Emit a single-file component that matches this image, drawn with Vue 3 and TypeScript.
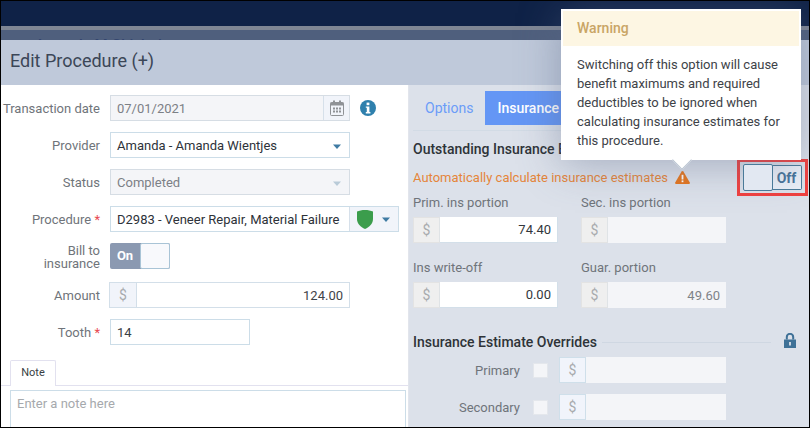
<script setup lang="ts">
const notch = 'M1 3.5h8L5 8z'
</script>

<template>
  <div class="frame">
    <div class="topbar">
      <span class="peek peek-grey"></span>
      <span class="peek peek-red"></span>
    </div>
    <div class="rule"></div>
    <div class="backdrop"><span class="backdrop-name">Amanda M Chisholm</span></div>
    <div class="modal">
      <header class="modal-head">Edit Procedure (+)</header>
      <div class="modal-body">
        <section class="left">
          <div class="row">
            <label class="lbl">Transaction date</label>
            <div class="field date disabled">
              <span class="val">07/01/2021</span>
              <span class="addon cal">
                <svg width="14" height="16" viewBox="0 0 14 16">
                  <rect x="0.5" y="2.5" width="13" height="13" rx="1" fill="none" stroke="#8f9296" />
                  <rect x="0.5" y="2.5" width="13" height="3" fill="#8f9296" />
                  <rect x="3" y="0.5" width="2" height="3" fill="#8f9296" />
                  <rect x="9" y="0.5" width="2" height="3" fill="#8f9296" />
                  <path d="M3 7.5h2v2H3zM6 7.5h2v2H6zM9 7.5h2v2H9zM3 10.5h2v2H3zM6 10.5h2v2H6zM9 10.5h2v2H9z" fill="#8f9296" />
                </svg>
              </span>
            </div>
            <svg class="info" width="16" height="16" viewBox="0 0 16 16">
              <circle cx="8" cy="8" r="8" fill="#2f80ad" />
              <rect x="6.6" y="2.6" width="2.8" height="2.6" fill="#fff" />
              <path d="M5.8 6.4h3.6v5.6h1v1.4H5.800V12h1V7.800h-1z" fill="#fff" />
            </svg>
          </div>
          <div class="row">
            <label class="lbl">Provider</label>
            <div class="field select">
              <span class="val dark">Amanda - Amanda Wientjes</span>
              <svg class="caret" width="10" height="10" viewBox="0 0 10 10"><path :d="notch" fill="#3f7ba3" /></svg>
            </div>
          </div>
          <div class="row">
            <label class="lbl">Status</label>
            <div class="field select disabled">
              <span class="val">Completed</span>
              <svg class="caret" width="10" height="10" viewBox="0 0 10 10"><path :d="notch" fill="#b9cbd8" /></svg>
            </div>
          </div>
          <div class="row">
            <label class="lbl">Procedure <i class="req">*</i></label>
            <div class="field proc">
              <span class="val dark">D2983 - Veneer Repair, Material Failure</span>
              <span class="addon shield">
                <svg width="16" height="19" viewBox="0 0 16 19">
                  <path d="M8 0C11 0 14 .6 16 1.6V9c0 4.6-3.6 8-8 10C3.600 17 0 13.600 0 9V1.600C2 .6 5 0 8 0z" fill="#3b9d4c" />
                </svg>
                <svg width="10" height="10" viewBox="0 0 10 10"><path :d="notch" fill="#3f7ba3" /></svg>
              </span>
            </div>
          </div>
          <div class="row bill">
            <label class="lbl two">Bill to<br />insurance</label>
            <div class="switch on">
              <span class="switch-label">On</span>
              <span class="knob"></span>
            </div>
          </div>
          <div class="row amount">
            <label class="lbl">Amount</label>
            <div class="money wide">
              <span class="cur">$</span>
              <span class="amt">124.00</span>
            </div>
          </div>
          <div class="row tooth">
            <label class="lbl">Tooth <i class="req">*</i></label>
            <div class="field short"><span class="val ink">14</span></div>
          </div>
          <div class="tabs-note">
            <span class="note-tab">Note</span>
          </div>
          <div class="note-box">Enter a note here</div>
        </section>

        <section class="right">
          <nav class="tabs">
            <span class="tab">Options</span>
            <span class="tab active">Insurance</span>
          </nav>
          <h3 class="heading first">Outstanding Insurance Estimates</h3>
          <div class="auto">
            <span class="auto-text">Automatically calculate insurance estimates</span>
            <svg class="warn" width="15" height="13" viewBox="0 0 15 13">
              <path d="M7.5 0c.4 0 .7.2.9.5l6.400 11c.4.7 0 1.500-.8 1.500H1c-.8 0-1.200-.8-.8-1.500l6.400-11c.2-.3.5-.5.900-.5z" fill="#e6761d" />
              <rect x="6.600" y="3.800" width="1.800" height="4.700" fill="#fff" />
              <rect x="6.600" y="9.400" width="1.800" height="1.800" fill="#fff" />
            </svg>
            <div class="switch-wrap">
              <div class="switch off">
                <span class="knob"></span>
                <span class="switch-label">Off</span>
              </div>
            </div>
          </div>
          <div class="grid">
            <div class="cell">
              <label class="cap">Prim. ins portion</label>
              <div class="money"><span class="cur grey">$</span><span class="amt white">74.40</span></div>
            </div>
            <div class="cell">
              <label class="cap">Sec. ins portion</label>
              <div class="money"><span class="cur grey">$</span><span class="amt dim"></span></div>
            </div>
            <div class="cell">
              <label class="cap">Ins write-off</label>
              <div class="money"><span class="cur grey">$</span><span class="amt white">0.00</span></div>
            </div>
            <div class="cell">
              <label class="cap">Guar. portion</label>
              <div class="money"><span class="cur grey">$</span><span class="amt dim">49.60</span></div>
            </div>
          </div>
          <div class="heading-row">
            <h3 class="heading">Insurance Estimate Overrides</h3>
            <span class="line"></span>
            <svg class="lock" width="12" height="15" viewBox="0 0 12 15">
              <path d="M0 6.500h12V15H0z" fill="#3f7197" />
              <path d="M2.800 6.500V4a3.200 3.200 0 0 1 6.400 0v2.500" fill="none" stroke="#3f7197" stroke-width="2" />
              <rect x="5.100" y="9" width="1.800" height="3.500" fill="#dce1ea" />
            </svg>
          </div>
          <div class="override">
            <label class="ov-lbl">Primary</label>
            <span class="check"></span>
            <div class="money ov"><span class="cur pale">$</span><span class="amt dim"></span></div>
          </div>
          <div class="override">
            <label class="ov-lbl">Secondary</label>
            <span class="check"></span>
            <div class="money ov"><span class="cur pale">$</span><span class="amt dim"></span></div>
          </div>
        </section>
      </div>
    </div>

    <aside class="popover">
      <div class="pop-head">Warning</div>
      <p class="pop-body">Switching off this option will cause benefit maximums and required deductibles to be ignored when calculating insurance estimates for this procedure.</p>
      <span class="pop-arrow"></span>
    </aside>
  </div>
</template>

<style>
html, body { margin: 0; background: #000; }
</style>

<style scoped>
.frame {
  position: relative;
  width: 810px;
  height: 428px;
  box-sizing: border-box;
  border: 1px solid #000;
  overflow: hidden;
  display: flex;
  flex-direction: column;
  font-family: Roboto, "Liberation Sans", sans-serif;
  font-size: 13px;
  color: #6f747a;
  background: #fff;
}
.topbar { position: relative; height: 25px; flex: none; background: #0f2247; }
.peek { position: absolute; bottom: 0; height: 2px; }
.peek-grey { left: 684px; width: 9px; background: #66708a; }
.peek-red { left: 738px; width: 23px; background: #8c1a48; }
.rule { height: 4px; flex: none; background: #7f8694; }
.backdrop { position: relative; height: 10px; flex: none; background: #4f5f7d; overflow: hidden; }
.backdrop-name { position: absolute; left: 34px; top: 6px; height: 4px; overflow: hidden; line-height: 18px; font-size: 15px; font-weight: 500; color: #34466f; }
.modal { flex: 1; display: flex; flex-direction: column; min-height: 0; }
.modal-head {
  height: 45px;
  flex: none;
  box-sizing: border-box;
  padding: 9px 0 0 9px;
  background: #bfc9da;
  font-size: 18px;
  line-height: 24px;
  color: #3b4657;
}
.modal-body { flex: 1; display: flex; min-height: 0; }
.left { width: 408px; flex: none; box-sizing: border-box; padding-top: 10px; border-right: 1px solid #e2e5ec; }
.row { display: flex; align-items: center; height: 26px; margin-bottom: 11px; }
.row.bill { height: 25px; margin-top: 1px; margin-bottom: 14px; }
.row.tooth { margin-bottom: 15px; }
.lbl { width: 99px; flex: none; margin-right: 10px; text-align: right; white-space: nowrap; }
.lbl.two { line-height: 13px; padding-top: 2px; }
.req { font-style: normal; color: #e8494f; }
.field {
  box-sizing: border-box;
  width: 240px;
  height: 26px;
  display: flex;
  align-items: center;
  border: 1px solid #ccdde8;
  background: #fff;
  padding-left: 6px;
}
.field.short { width: 140px; }
.field.disabled { background: #f4f5f8; border-color: #d6dde4; }
.val { flex: 1; color: #7c8086; white-space: nowrap; }
.val.dark { color: #2d3239; }
.val.ink { color: #3b4046; }
.date { position: relative; padding-right: 0; }
.addon { display: flex; align-items: center; height: 100%; background: #f1f4fa; border-left: 1px solid #d6e0ea; }
.cal { width: 25px; justify-content: center; }
.info { margin-left: 10px; }
.caret { margin-right: 7px; }
.select .caret { margin-top: 1px; }
.proc { width: 289px; padding-right: 0; }
.proc .val { overflow: hidden; }
.shield { width: 49px; flex: none; gap: 8px; padding-left: 7px; box-sizing: border-box; }
.switch { display: flex; width: 60px; height: 26px; box-sizing: border-box; }
.switch-label { display: flex; align-items: center; justify-content: center; font-weight: 700; font-size: 13px; }
.on { background: #8b99b1; border-radius: 2px; }
.on .switch-label { width: 30px; color: #fff; }
.on .knob { width: 30px; box-sizing: border-box; border: 1px solid #a9c4d6; background: #f8f9fc; border-radius: 2px; }
.off { width: 59px; height: 27px; position: relative; }
.off .knob { position: relative; z-index: 1; width: 30px; box-sizing: border-box; border: 1px solid #4a7a99; border-radius: 2px; background: #e2e8f2; }
.off .switch-label { width: 30px; margin-left: -1px; height: 25px; margin-top: 1px; box-sizing: border-box; border: 1px solid #4a7a99; border-left: 0; border-radius: 0 2px 2px 0; color: #47749a; font-size: 14px; background: #ebf0f8; }
.money { display: flex; height: 26px; width: 145px; box-sizing: border-box; }
.money.wide { width: 241px; margin-left: -1px; border: 1px solid #d3dfe9; }
.cur { width: 27px; flex: none; display: flex; align-items: center; justify-content: center; color: #a8abae; background: #f1f4fa; font-size: 14px; border-right: 1px solid #d3dfe9; box-sizing: border-box; }
.cur.grey { background: #efefef; border: 1px solid #e3e3e3; border-right: 1px solid #dfe3e6; }
.cur.pale { background: #f1f4fb; border: 1px solid #cfdfea; }
.amt { flex: 1; display: flex; align-items: center; justify-content: flex-end; padding-right: 6px; color: #3f4449; font-size: 13px; }
.amt.white { background: #fff; color: #33373c; border-right: 1px solid #d3dfe9; border-bottom: 1px solid #d3dfe9; }
.amt.dim { background: #f4f5f8; color: #7f8388; }
.tabs-note { margin-top: 0; height: 26px; box-sizing: border-box; border-bottom: 1px solid #e2e1ef; display: flex; padding-left: 9px; }
.note-tab { width: 46px; height: 26px; box-sizing: border-box; border: 1px solid #e2e1ef; border-bottom: 0; background: #fff; border-radius: 2px 2px 0 0; text-align: center; line-height: 24px; font-size: 11px; color: #3a3f44; }
.note-box { margin: 4px 0 0 9px; width: 396px; height: 60px; box-sizing: border-box; border: 1px solid #ccdde8; padding: 5px 6px; color: #a6a9ad; }
.right { flex: 1; box-sizing: border-box; padding: 6px 0 0 4px; background: #dce1ea; min-width: 0; }
.tabs { display: flex; height: 34px; margin-right: 8px; padding-left: 0; border-bottom: 1px solid #d2dbe5; padding-bottom: 5px; box-sizing: content-box; }
.tab { display: flex; align-items: center; padding: 0 12px; font-size: 14px; color: #6b9cf8; }
.tab.active { background: #6496f5; color: #fff; width: 96px; box-sizing: border-box; font-weight: 500; }
.heading { margin: 0; font-size: 14px; line-height: 18px; font-weight: 500; color: #2e3338; white-space: nowrap; }
.heading.first { margin-top: 9px; }
.auto { display: flex; align-items: center; height: 27px; margin-top: 6px; position: relative; }
.auto-text { color: #e5853a; font-size: 13px; }
.warn { margin-left: 7px; }
.switch-wrap { position: absolute; left: 324px; top: -5px; padding: 2px 3px; border: 3px solid #f0403f; }
.grid { display: grid; grid-template-columns: 145px 146px; column-gap: 23px; row-gap: 17px; margin-top: 4px; }
.cap { display: block; height: 17px; line-height: 16px; margin-bottom: 7px; }
.cell .money { margin-top: -2px; }
.heading-row { display: flex; align-items: center; margin-top: 25px; height: 18px; }
.line { flex: 0 0 169px; height: 1px; margin-left: 5px; background: #cfd7e2; }
.lock { margin-left: 13px; align-self: flex-start; }
.override { display: flex; align-items: center; height: 26px; margin-top: 11px; }
.heading-row + .override { margin-top: 6px; }
.ov-lbl { width: 107px; text-align: right; }
.check { width: 15px; height: 15px; margin-left: 13px; background: #f4f5f8; border: 1px solid #e4e7ec; box-sizing: border-box; }
.ov { width: 167px; margin-left: 11px; }
.popover {
  position: absolute;
  left: 560px;
  top: 8px;
  width: 240px;
  height: 151px;
  background: #fff;
  box-shadow: 0 4px 40px rgba(90, 105, 135, .45);
  border-top: 1px solid #fff;
  box-sizing: border-box;
}
.pop-head { height: 35px; margin: 1px 2px 0; box-sizing: border-box; padding: 7px 14px; background: #fdf6e3; color: #c9a566; font-size: 14px; font-weight: 500; line-height: 20px; }
.pop-body { margin: 0; padding: 9px 16px 0; font-size: 13px; line-height: 19px; color: #3d4247; }
.pop-arrow { position: absolute; left: 114px; bottom: -7px; width: 14px; height: 14px; box-sizing: border-box; background: #fff; transform: rotate(45deg); border-right: 1px solid #b9c3d1; border-bottom: 1px solid #b9c3d1; }
</style>
